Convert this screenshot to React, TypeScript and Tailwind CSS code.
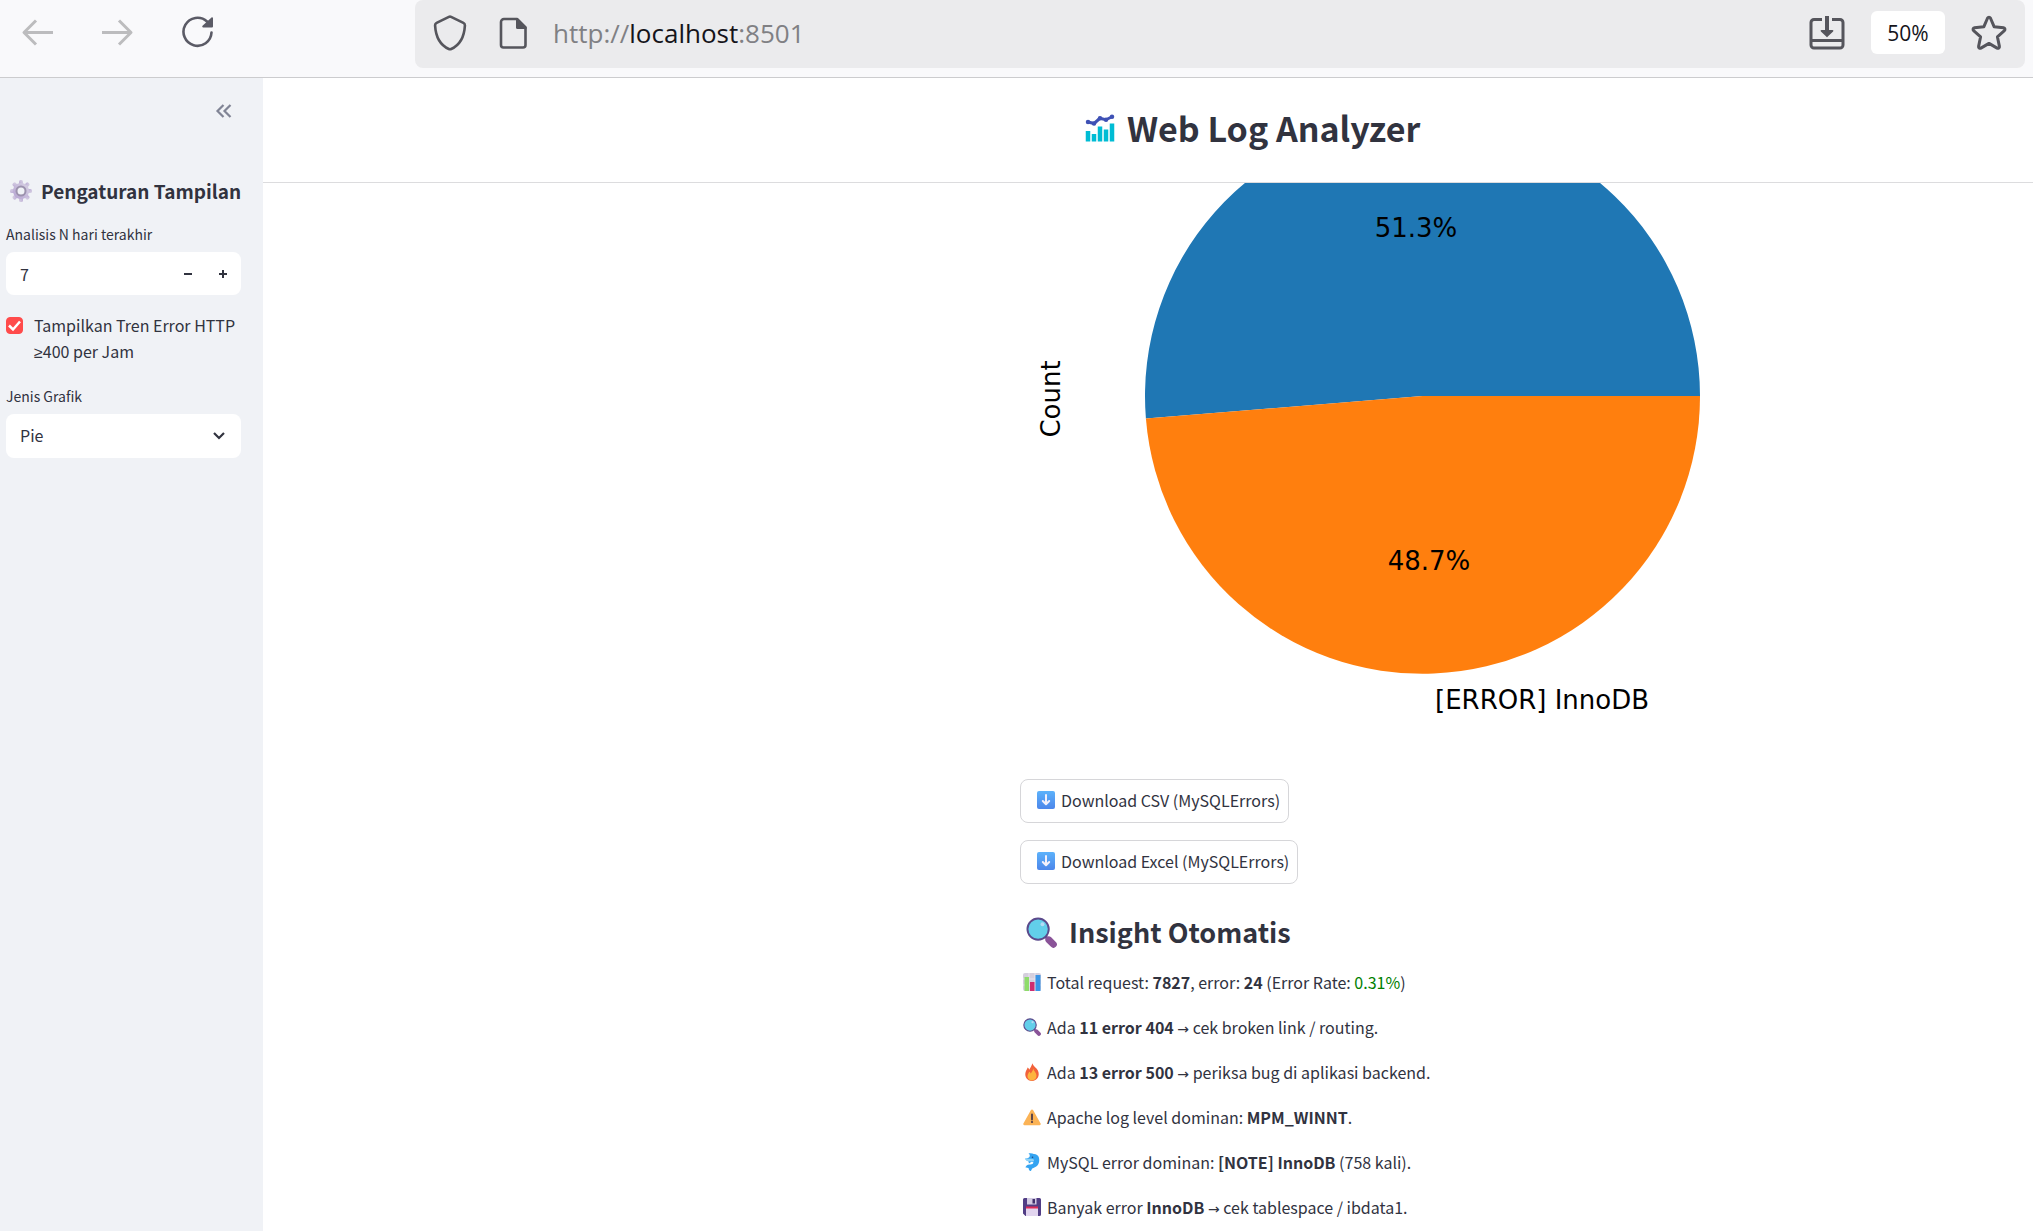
import { useState, type ReactNode } from 'react';
import { FcComboChart } from 'react-icons/fc';

const FONT = "font-['Noto_Sans_CJK_SC','Noto_Sans',sans-serif]";

function BackIcon() {
  return (
    <svg viewBox="0 0 34 34" className="size-[34px]" fill="none" stroke="#bcbcbe" strokeWidth="3" strokeLinejoin="round">
      <path d="M33 16.500H3.500M16 4.500l-12 12 12 12" />
    </svg>
  );
}

function ForwardIcon() {
  return (
    <svg viewBox="0 0 34 34" className="size-[34px]" fill="none" stroke="#bcbcbe" strokeWidth="3" strokeLinejoin="round">
      <path d="M2 16.500h29.500M19 4.500l12 12-12 12" />
    </svg>
  );
}

function ReloadIcon() {
  return (
    <svg viewBox="0 0 34 34" className="size-[34px]" fill="none" stroke="#5b5b66" strokeWidth="2.600" strokeLinecap="round">
      <path d="M31.500 16.500A14 14 0 1 1 27 5.500" />
      <path d="M33 2.200v8.300a1 1 0 0 1-1 1h-8.800c-.9 0-1.300-1-.7-1.700l9-8.200c.6-.6 1.500-.2 1.500.6z" fill="#5b5b66" stroke="none" />
    </svg>
  );
}

function ShieldIcon() {
  return (
    <svg viewBox="0 0 34 36" className="h-9 w-[34px]" fill="none" stroke="#55555c" strokeWidth="2.600" strokeLinejoin="round">
      <path d="M15.900 1.900a2.500 2.500 0 0 1 2.200 0l12.300 6c1.200.6 1.600 1.400 1.500 2.700C31.300 21 28 29.500 18.200 34a2.600 2.600 0 0 1-2.400 0C6 29.500 2.700 21 2.100 10.600 2 9.300 2.400 8.500 3.600 7.900z" />
    </svg>
  );
}

function PageIcon() {
  return (
    <svg viewBox="0 0 28 32" className="h-8 w-7" fill="none" stroke="#55555c" strokeWidth="2.600" strokeLinejoin="round">
      <path d="M5 2h13l8.500 8.500V28a2.500 2.500 0 0 1-2.500 2.500H4.500A2.500 2.500 0 0 1 2 28V5a3 3 0 0 1 3-3z" />
      <path d="M17 1h1.500L27.500 10v2H18.500a1.500 1.500 0 0 1-1.500-1.500z" fill="#55555c" stroke="none" />
    </svg>
  );
}

function InstallIcon() {
  return (
    <svg viewBox="0 0 36 34" className="h-[34px] w-9" fill="none" stroke="#55555c" strokeWidth="3">
      <path d="M13 3.500H5a3 3 0 0 0-3 3V29a3 3 0 0 0 3 3h26a3 3 0 0 0 3-3V6.500a3 3 0 0 0-3-3h-8M2 24.500h32" />
      <path d="M18 0v16" strokeWidth="4" />
      <path d="M12.500 14h11a1 1 0 0 1 .6 1.600l-5.300 5a1 1 0 0 1-1.600 0l-5.300-5a1 1 0 0 1 .6-1.600z" fill="#55555c" stroke="none" />
    </svg>
  );
}

function StarIcon() {
  return (
    <svg viewBox="0 0 36 36" className="size-9" fill="none" stroke="#55555c" strokeWidth="3" strokeLinejoin="round">
      <path d="M16.600 3a1.600 1.600 0 0 1 2.800 0l3.700 8.700 9.500 1.100a1.600 1.600 0 0 1 .8 2.800l-7 6.200 2 9.600a1.600 1.600 0 0 1-2.300 1.700L18 28.400l-8.100 4.700a1.600 1.600 0 0 1-2.300-1.700l2-9.600-7-6.200a1.600 1.600 0 0 1 .8-2.800l9.500-1.100z" />
    </svg>
  );
}

function Gear() {
  return (
    <svg viewBox="0 0 22 22" className="size-[22px] shrink-0">
      <defs>
        <linearGradient id="gear" x1="0" y1="1" x2="1" y2="0">
          <stop offset="0" stopColor="#b5a3d2" />
          <stop offset="1" stopColor="#d9d3e4" />
        </linearGradient>
      </defs>
      <g fill="url(#gear)">
        {[0, 45, 90, 135, 180, 225, 270, 315].map((a) => (
          <rect key={a} x="9" y="0" width="4" height="6" rx="1.500" transform={`rotate(${a} 11 11)`} />
        ))}
        <circle cx="11" cy="11" r="8" />
      </g>
      <circle cx="11" cy="11" r="4.500" fill="#f0f2f6" stroke="#9c92ae" strokeWidth="2" />
    </svg>
  );
}

function Magnifier({ className }: { className: string }) {
  return (
    <svg viewBox="0 0 32 32" className={className}>
      <path d="m19 19 5 5" stroke="#5b4584" strokeWidth="3" />
      <path d="m23.500 23.500 4.800 4.800" stroke="#8a5398" strokeWidth="7" strokeLinecap="round" />
      <circle cx="12.500" cy="12.500" r="11" fill="#62cfea" stroke="#5b4a8c" strokeWidth="2" />
      <circle cx="17" cy="7.500" r="2" fill="#b4dcf6" />
    </svg>
  );
}

function DownArrow() {
  return (
    <svg viewBox="0 0 18 18" className="size-[18px] shrink-0">
      <defs>
        <linearGradient id="down" x1="0" y1="0" x2="0" y2="1">
          <stop offset="0" stopColor="#5cb2fb" />
          <stop offset="1" stopColor="#4d86ea" />
        </linearGradient>
      </defs>
      <rect width="18" height="18" rx="2" fill="url(#down)" />
      <path d="M9 4v9M5.800 10 9 13.300 12.200 10" fill="none" stroke="#f4f0fb" strokeWidth="2" strokeLinecap="round" strokeLinejoin="round" />
    </svg>
  );
}

function BarChart() {
  return (
    <svg viewBox="0 0 18 18" className="size-[18px]">
      <rect width="18" height="18" rx="2" fill="#d5cfdd" />
      <path d="M0 6h18M0 12h18M6 0v18M12 0v18" stroke="#e9e5ee" />
      <rect x="1.500" y="4" width="4.500" height="14" fill="#8fdc6c" />
      <rect x="7" y="9" width="4.500" height="9" fill="#cf2d70" />
      <rect x="12.500" y="2" width="5" height="16" fill="#3b95e6" />
    </svg>
  );
}

function Fire() {
  return (
    <svg viewBox="0 0 18 18" className="size-[18px]">
      <path d="M9.500.3c.5 3 4 4.300 5.400 7.200C17.400 12.800 14 18 9 18S1.500 13.500 2.500 9.500C3 7 4.300 6.300 4.500 4.500c1.200.6 1.600 1.500 1.600 2.200C7.600 5 8.500 2.600 9.500.3z" fill="#f2623b" />
      <path d="M10.300 5.500c.2 2.300 3.200 4 3.200 7.300 0 2.800-2 4.700-4.500 4.700s-4.500-1.700-4.500-4.200c0-2 1.200-3.200 1.700-4.500.9.400 1.300 1 1.400 1.700 1.300-1.200 2.300-3 2.700-5z" fill="#fdb43f" />
    </svg>
  );
}

function Warning() {
  return (
    <svg viewBox="0 0 18 18" className="size-[18px]">
      <path d="M7.800 2.200a1.400 1.400 0 0 1 2.400 0l7.400 13.200a1.200 1.200 0 0 1-1 1.800H1.400a1.200 1.200 0 0 1-1-1.800z" fill="#fbb356" />
      <path d="M9 6.500v5" stroke="#4b3a48" strokeWidth="1.800" strokeLinecap="round" />
      <circle cx="9" cy="14" r="1.100" fill="#4b3a48" />
    </svg>
  );
}

function Dolphin() {
  return (
    <svg viewBox="0 0 18 18" className="size-[18px]">
      <path d="M5.500.3C8 0 9.500.2 10.800.9 13 .8 15.300 2 15.900 4.600c1.200 5-.8 8.800-5 10.200-1.600.6-2 1-2.300 1.900-.3.800-.8 1.300-1.600 1.300-1-.9-1.300-1.700-1.300-2.700-1-.5-2.200-.9-3.200-.7.200-1.900 1.800-3.300 4.300-3.100 2.100.2 3.400-.6 3.600-2.200l-1.900-.5-2.600 1.700-.4-2.300C3.800 8 2.500 7 2.200 5.500c1.700.1 2.800-.4 4.200-1.500C7.100 3 7 1.500 5.500.3z" fill="#35a4f1" />
      <path d="M2.200 5.500c3 .6 5.300-.2 7.700.6 1.600.6 1.200 1.900.5 2.500l-1.900-.2-3-.2C3.800 8 2.500 7 2.200 5.500z" fill="#8fd3f7" />
      <circle cx="9.500" cy="4.300" r=".8" fill="#2b4a7b" />
    </svg>
  );
}

function Floppy() {
  return (
    <svg viewBox="0 0 18 18" className="size-[18px]">
      <path d="M1.500 0h15A1.500 1.500 0 0 1 18 1.500v15a1.500 1.500 0 0 1-1.500 1.500h-14L0 15.500v-14A1.500 1.500 0 0 1 1.500 0z" fill="#513d85" />
      <rect x="4" width="9.500" height="6.500" fill="#d3cbe3" />
      <rect x="9.500" y="1" width="2.500" height="4.500" fill="#3f2f6b" />
      <rect x="3" y="9" width="12" height="9" fill="#e2d5ef" />
      <rect x="3" y="8.500" width="12" height="2" fill="#df2b56" />
    </svg>
  );
}

function Toolbar() {
  return (
    <header className="flex h-[78px] shrink-0 items-start border-b border-[#ccccce] bg-[#f9f9fb] pr-2">
      <nav aria-label="Navigasi" className="flex w-[415px] shrink-0 items-center gap-[46px] pt-4 pl-5">
        <button type="button" aria-label="Kembali" disabled><BackIcon /></button>
        <button type="button" aria-label="Maju" disabled><ForwardIcon /></button>
        <button type="button" aria-label="Muat ulang"><ReloadIcon /></button>
      </nav>
      <div className="flex h-[68px] min-w-0 flex-1 items-center rounded-lg bg-[#ebebed] px-[18px] pb-[3px]">
        <button type="button" aria-label="Perlindungan" className="mr-8"><ShieldIcon /></button>
        <button type="button" aria-label="Info situs" className="mr-[26px]"><PageIcon /></button>
        <a href="http://localhost:8501" className="flex-1 pt-0.5 font-['Open_Sans',sans-serif] text-[26px] text-[#808084]">
          http://<span className="text-[#15141a]">localhost</span>:8501
        </a>
        <button type="button" aria-label="Pasang" className="mr-[26px]"><InstallIcon /></button>
        <button type="button" className="mr-[26px] h-[43px] w-[74px] rounded-md bg-white pt-0.5 font-['Open_Sans',sans-serif] text-[21px] text-[#15141a]">50%</button>
        <button type="button" aria-label="Tandai"><StarIcon /></button>
      </div>
    </header>
  );
}

function Sidebar() {
  const [days, setDays] = useState(7);
  return (
    <aside className="w-[263px] shrink-0 bg-[#f0f2f6] pr-[22px] pl-[6px]">
      <div className="flex h-[66px] items-center justify-end pr-2">
        <button type="button" aria-label="Tutup bilah sisi">
          <svg viewBox="0 0 18 14" className="h-[14px] w-[18px]" fill="none" stroke="#808495" strokeWidth="2.200">
            <path d="M8.500 1 2.500 7l6 6M15.500 1l-6 6 6 6" />
          </svg>
        </button>
      </div>
      <h2 className="mt-[31px] flex h-8 items-center gap-[9px] pl-1 text-[19px] leading-8 font-bold whitespace-nowrap">
        <Gear />
        Pengaturan Tampilan
      </h2>
      <label htmlFor="days" className="mt-[15px] block text-sm leading-6">Analisis N hari terakhir</label>
      <div className="mt-[6px] flex h-[43px] items-center rounded-lg bg-white">
        <input id="days" value={days} onChange={(e) => setDays(Number(e.target.value) || 0)} className="min-w-0 flex-1 pl-[14px] text-base outline-none" />
        <button type="button" aria-label="Kurangi" onClick={() => setDays(days - 1)} className="flex h-full w-[35px] items-center justify-center">
          <svg viewBox="0 0 10 10" className="size-[10px]" stroke="#31333f" strokeWidth="2"><path d="M1 5h8" /></svg>
        </button>
        <button type="button" aria-label="Tambah" onClick={() => setDays(days + 1)} className="flex h-full w-[36px] items-center justify-center">
          <svg viewBox="0 0 10 10" className="size-[10px]" stroke="#31333f" strokeWidth="2"><path d="M1 5h8M5 1v8" /></svg>
        </button>
      </div>
      <label className="mt-[17px] flex gap-[11px] text-base leading-[26px]">
        <span className="relative mt-[5px] size-[17px] shrink-0">
          <input type="checkbox" defaultChecked className="peer block size-[17px] appearance-none rounded border border-[#c8cad2] checked:border-[#ff4b4b] checked:bg-[#ff4b4b]" />
          <svg viewBox="0 0 17 17" className="pointer-events-none absolute inset-0 hidden size-[17px] peer-checked:block" fill="none" stroke="white" strokeWidth="2.500">
            <path d="m3 8.500 4 4 7-8" />
          </svg>
        </span>
        <span>Tampilkan Tren Error HTTP <span className="font-['Noto_Sans',sans-serif]">≥</span>400 per Jam</span>
      </label>
      <label htmlFor="kind" className="mt-[19px] block text-sm leading-6">Jenis Grafik</label>
      <div className="relative mt-[6px]">
        <select id="kind" defaultValue="Pie" className="h-11 w-full appearance-none rounded-lg bg-white pb-0.5 pl-[14px] text-base outline-none">
          <option>Pie</option>
          <option>Bar</option>
        </select>
        <svg viewBox="0 0 12 8" className="pointer-events-none absolute top-[18px] right-4 h-2 w-3" fill="none" stroke="#31333f" strokeWidth="2.200">
          <path d="m1 1 5 5 5-5" />
        </svg>
      </div>
    </aside>
  );
}

function PieChart() {
  return (
    <svg viewBox="0 0 700 596" className="h-[596px] w-[700px] font-['DejaVu_Sans',sans-serif] text-[26px]" fill="#000" role="img" aria-label="Distribusi error MySQL">
      <path d="M402.500 213H680A277.500 277.500 0 1 0 125.900 235.600z" fill="#1f77b4" />
      <path d="M402.500 213H680A277.500 277.500 0 0 1 125.900 235.600z" fill="#ff7f0e" />
      <text x="396" y="54" textAnchor="middle">51.3%</text>
      <text x="409" y="387" textAnchor="middle">48.7%</text>
      <text x="415" y="526">[ERROR] InnoDB</text>
      <text transform="translate(40 216) rotate(-90)" textAnchor="middle">Count</text>
    </svg>
  );
}

function DownloadButton({ children }: { children: ReactNode }) {
  return (
    <button type="button" className="flex h-11 items-center gap-[6px] rounded-lg border border-[#d6d6d9] bg-white px-2 pb-0.5 pl-4 text-base">
      <DownArrow />
      {children}
    </button>
  );
}

function Arrow() {
  return <span className="font-['DejaVu_Sans',sans-serif] text-[14px] leading-none">→</span>;
}

const insights: { icon: ReactNode; text: ReactNode }[] = [
  { icon: <BarChart />, text: <>Total request: <b>7827</b>, error: <b>24</b> (Error Rate: <span className="text-[#008000]">0.31%</span>)</> },
  { icon: <Magnifier className="size-[18px]" />, text: <>Ada <b>11 error 404</b> <Arrow /> cek broken link / routing.</> },
  { icon: <Fire />, text: <>Ada <b>13 error 500</b> <Arrow /> periksa bug di aplikasi backend.</> },
  { icon: <Warning />, text: <>Apache log level dominan: <b>MPM_WINNT</b>.</> },
  { icon: <Dolphin />, text: <>MySQL error dominan: <b>[NOTE] InnoDB</b> (758 kali).</> },
  { icon: <Floppy />, text: <>Banyak error <b>InnoDB</b> <Arrow /> cek tablespace / ibdata1.</> },
];

export default function App() {
  return (
    <div className={`${FONT} flex h-screen flex-col overflow-hidden bg-white text-[#31333f]`}>
      <Toolbar />
      <div className="flex min-h-0 flex-1">
        <Sidebar />
        <main className="min-w-0 flex-1">
          <div className="grid h-[105px] grid-cols-[757fr_1013fr] items-center border-b border-[#dcdcde] pb-1">
            <h1 className="col-start-2 flex items-center gap-[9px] pl-[62px] text-[34px] leading-[48px] font-bold">
              <FcComboChart className="size-9" />
              Web Log Analyzer
            </h1>
          </div>
          <div className="grid grid-cols-[757fr_1013fr]">
            <div className="col-start-2 flex flex-col items-start">
              <PieChart />
              <DownloadButton>Download CSV (MySQLErrors)</DownloadButton>
              <div className="mt-[17px]">
                <DownloadButton>Download Excel (MySQLErrors)</DownloadButton>
              </div>
              <h2 className="mt-6 flex h-12 items-center gap-3 pl-[6px] text-[27px] leading-[48px] font-bold">
                <Magnifier className="size-[31px]" />
                Insight Otomatis
              </h2>
              <ul className="mt-[13px] flex flex-col gap-[19px] pl-[3px] text-base leading-[26px]">
                {insights.map((item, i) => (
                  <li key={i} className="flex h-[26px] items-center gap-[6px]">
                    {item.icon}
                    <p>{item.text}</p>
                  </li>
                ))}
              </ul>
            </div>
          </div>
        </main>
      </div>
    </div>
  );
}
